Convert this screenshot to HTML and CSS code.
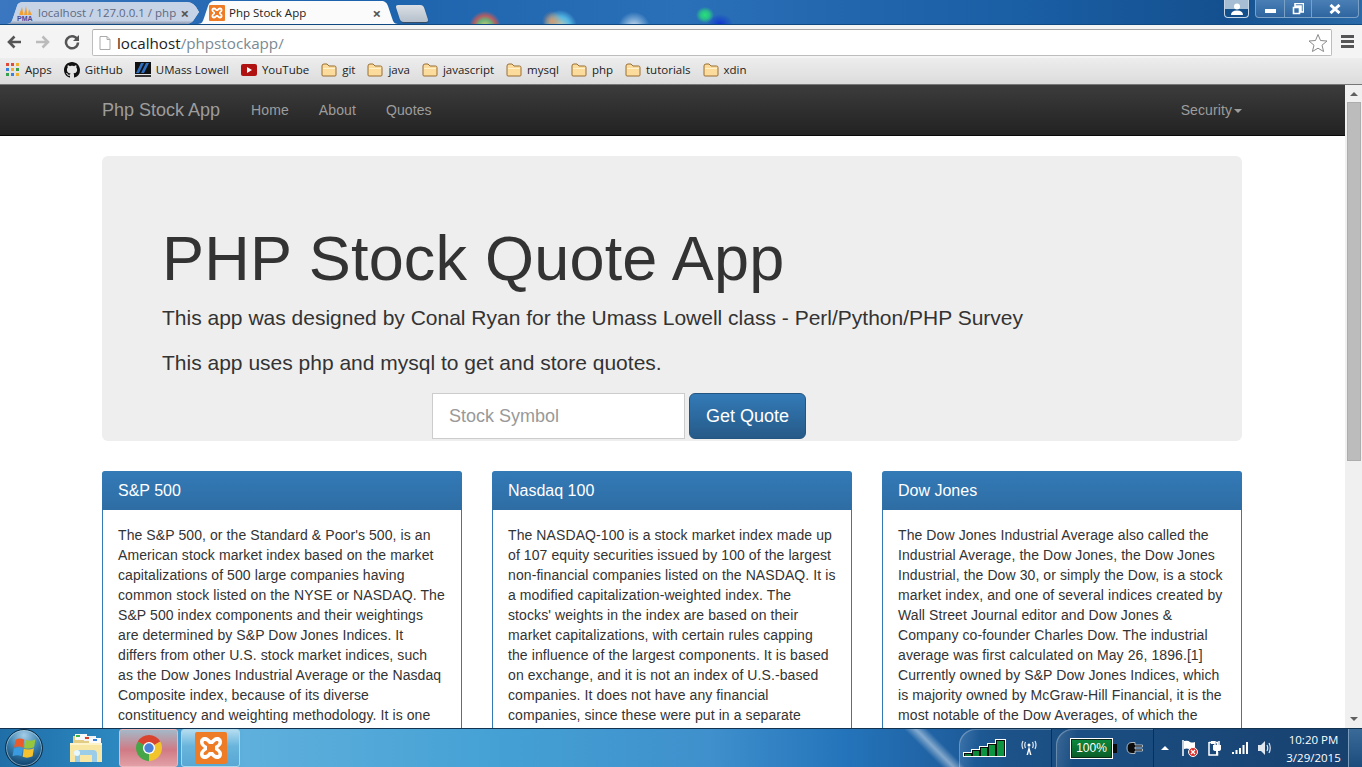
FILE: index.html
```html
<!DOCTYPE html>
<html lang="en">
<head>
    <meta charset="UTF-8">
    <meta name="viewport" content="width=device-width, initial-scale=1.0">
    <title>Php Stock App</title>
    <link rel="stylesheet" href="styles.css">
</head>
<body>

    <svg class="defs" width="0" height="0">
        <symbol id="folder" viewBox="0 0 16 14">
            <path d="M1 3 Q1 1 3 1 H6 L8 3 H13.5 Q15 3 15 4.500 V12 Q15 13 14 13 H2 Q1 13 1 12 Z" fill="#fbdc9c" stroke="#9a6f35"/>
            <path d="M2 5 H14 V6 H2 Z" fill="#fff1c9"/>
        </symbol>
        <symbol id="xampp" viewBox="0 0 32 32">
            <rect width="32" height="32" rx="2" fill="#ee7b25"/>
            <path d="M10 5 C7 5 5 7 5 10 C5 13 7 14 9 16 C7 18 5 19 5 22 C5 25 7 27 10 27 C13 27 14 25 16 23.500 C18 25 19 27 22 27 C25 27 27 25 27 22 C27 19 25 18 23 16 C25 14 27 13 27 10 C27 7 25 5 22 5 C19 5 18 7 16 8.500 C14 7 13 5 10 5 Z M10 9 C12 9 13 11 14 12 H18 C19 11 20 9 22 9 C23 9 23.500 9.500 23.500 10.500 C23.500 12 21 13.500 20 14 V18 C21 18.500 23.500 20 23.500 21.500 C23.500 22.500 23 23 22 23 C20 23 19 21 18 20 H14 C13 21 12 23 10 23 C9 23 8.500 22.500 8.500 21.500 C8.500 20 11 18.500 12 18 V14 C11 13.500 8.500 12 8.500 10.500 C8.500 9.500 9 9 10 9 Z" fill="#fff" fill-rule="evenodd"/>
        </symbol>
    </svg>

    <!-- Browser tabs -->
    <div class="tabstrip">
        <div class="tab tab-back">
            <svg class="tab-icon" viewBox="0 0 16 16" width="16" height="16">
                <path d="M2 10 L5 2 L6.500 10 Z M7 10 L9 1 L10.500 10 Z M11 10 L12 4 L15 10 Z" fill="#f0a030"/>
                <text x="0" y="15.500" class="pma">PMA</text>
            </svg>
            <span class="tab-title">localhost / 127.0.0.1 / php</span>
            <span class="tab-close">&#215;</span>
        </div>
        <div class="tab tab-active">
            <svg class="tab-icon" width="16" height="16"><use href="#xampp"/></svg>
            <span class="tab-title">Php Stock App</span>
            <span class="tab-close">&#215;</span>
        </div>
        <div class="tab-new"></div>
        <div class="window-controls">
            <div class="win-user">
                <svg viewBox="0 0 14 12" width="14" height="12">
                    <circle cx="7" cy="3.500" r="3" fill="#fff"/>
                    <path d="M1 12 Q1 7.500 7 7.500 Q13 7.500 13 12 Z" fill="#fff"/>
                </svg>
            </div>
            <div class="win-buttons">
                <div class="win-btn win-min"><span class="min-bar"></span></div>
                <div class="win-btn win-max">
                    <svg viewBox="0 0 12 12" width="12" height="12">
                        <path d="M3 0.500 H11.500 V9 H9 V3 H3 Z M1.500 4.500 H7.500 V10.500 H1.500 Z" fill="none" stroke="#fff" stroke-width="1.600"/>
                    </svg>
                </div>
                <div class="win-btn win-close">
                    <svg viewBox="0 0 12 10" width="12" height="10">
                        <path d="M1.500 1 L10.500 9 M10.500 1 L1.500 9" stroke="#fff" stroke-width="3"/>
                    </svg>
                </div>
            </div>
        </div>
    </div>

    <!-- Address bar -->
    <div class="toolbar">
        <svg class="tool-icon" viewBox="0 0 16 16" width="16" height="16">
            <path d="M15 8 H4 M8.500 2.500 L3 8 L8.500 13.500" fill="none" stroke="#555" stroke-width="2.600"/>
        </svg>
        <svg class="tool-icon" viewBox="0 0 16 16" width="16" height="16">
            <path d="M1 8 H12 M7.500 2.500 L13 8 L7.500 13.500" fill="none" stroke="#bbb" stroke-width="2.600"/>
        </svg>
        <svg class="tool-icon" viewBox="0 0 16 16" width="16" height="16">
            <path d="M13 5 A6 6 0 1 0 14 8.500" fill="none" stroke="#555" stroke-width="2.500"/>
            <path d="M15 1 V7 H9 Z" fill="#555"/>
        </svg>
        <div class="omnibox">
            <svg class="page-icon" viewBox="0 0 12 14" width="12" height="14">
                <path d="M1 0.500 H8 L11 3.500 V13.500 H1 Z M8 0.500 V3.500 H11" fill="#fff" stroke="#aaa"/>
            </svg>
            <span class="url"><span class="url-host">localhost</span>/phpstockapp/</span>
            <svg class="star" viewBox="0 0 20 20" width="20" height="20">
                <path d="M10 1.500 L12.500 7.500 L19 8 L14 12.200 L15.600 18.500 L10 15.200 L4.400 18.500 L6 12.200 L1 8 L7.500 7.500 Z" fill="#fff" stroke="#8a8a8a"/>
            </svg>
        </div>
        <div class="menu-icon"><span></span><span></span><span></span></div>
    </div>

    <!-- Bookmarks -->
    <div class="bookmarks">
        <span class="bookmark bookmark-apps">
            <svg viewBox="0 0 14 14" width="14" height="14">
                <rect x="0" y="0" width="3" height="3" fill="#e04a3a"/><rect x="5" y="0" width="3" height="3" fill="#e04a3a"/><rect x="10" y="0" width="3" height="3" fill="#f0b030"/>
                <rect x="0" y="5" width="3" height="3" fill="#3a80e0"/><rect x="5" y="5" width="3" height="3" fill="#f0b030"/><rect x="10" y="5" width="3" height="3" fill="#3aa050"/>
                <rect x="0" y="10" width="3" height="3" fill="#3aa050"/><rect x="5" y="10" width="3" height="3" fill="#3a80e0"/><rect x="10" y="10" width="3" height="3" fill="#f0b030"/>
            </svg>
            Apps
        </span>
        <span class="bookmark">
            <svg viewBox="0 0 16 16" width="16" height="16">
                <path fill="#111" d="M8 0C3.580 0 0 3.580 0 8c0 3.540 2.290 6.530 5.470 7.590.4.070.55-.170.55-.380 0-.190-.010-.820-.010-1.490-2.010.370-2.530-.490-2.690-.940-.090-.230-.480-.940-.820-1.130-.280-.150-.680-.520-.010-.530.630-.010 1.080.580 1.230.820.720 1.210 1.870.870 2.330.660.070-.520.280-.870.510-1.070-1.780-.200-3.640-.890-3.640-3.950 0-.870.310-1.590.820-2.150-.080-.200-.360-1.020.080-2.120 0 0 .670-.210 2.200.820.640-.180 1.320-.270 2-.270s1.360.090 2 .270c1.530-1.040 2.200-.820 2.200-.820.440 1.100.160 1.920.080 2.120.510.560.820 1.270.820 2.150 0 3.070-1.870 3.750-3.650 3.950.290.250.540.730.540 1.480 0 1.070-.010 1.930-.010 2.200 0 .210.150.460.550.380A8.010 8.010 0 0 0 16 8c0-4.420-3.580-8-8-8z"/>
            </svg>
            GitHub
        </span>
        <span class="bookmark">
            <svg viewBox="0 0 16 16" width="16" height="16">
                <rect width="16" height="12" fill="#111"/>
                <path d="M1 11 L6 1 H9 L4 11 Z M6 11 L11 1 H14 L9 11 Z" fill="#2f6fc0"/>
                <rect x="0" y="13" width="16" height="2" fill="#333"/>
            </svg>
            UMass Lowell
        </span>
        <span class="bookmark">
            <svg viewBox="0 0 16 12" width="16" height="12">
                <rect width="16" height="12" rx="2" fill="#b01212"/>
                <path d="M6 3 L11 6 L6 9 Z" fill="#fff"/>
            </svg>
            YouTube
        </span>
        <span class="bookmark"><svg width="16" height="14"><use href="#folder"/></svg>git</span>
        <span class="bookmark"><svg width="16" height="14"><use href="#folder"/></svg>java</span>
        <span class="bookmark"><svg width="16" height="14"><use href="#folder"/></svg>javascript</span>
        <span class="bookmark"><svg width="16" height="14"><use href="#folder"/></svg>mysql</span>
        <span class="bookmark"><svg width="16" height="14"><use href="#folder"/></svg>php</span>
        <span class="bookmark"><svg width="16" height="14"><use href="#folder"/></svg>tutorials</span>
        <span class="bookmark"><svg width="16" height="14"><use href="#folder"/></svg>xdin</span>
    </div>

    <!-- The page itself -->
    <div class="viewport">
        <div class="page">
            <nav class="navbar">
                <div class="container nav-row">
                    <a class="brand">Php Stock App</a>
                    <a class="nav-link">Home</a>
                    <a class="nav-link">About</a>
                    <a class="nav-link">Quotes</a>
                    <a class="nav-link nav-right">Security<span class="caret"></span></a>
                </div>
            </nav>

            <div class="container">
                <div class="jumbotron">
                    <h1>PHP Stock Quote App</h1>
                    <p>This app was designed by Conal Ryan for the Umass Lowell class - Perl/Python/PHP Survey</p>
                    <p>This app uses php and mysql to get and store quotes.</p>
                    <form class="quote-form">
                        <input class="symbol-input" type="text" placeholder="Stock Symbol">
                        <button class="quote-button" type="button">Get Quote</button>
                    </form>
                </div>

                <div class="panels">
                    <div class="panel">
                        <div class="panel-heading">S&amp;P 500</div>
                        <div class="panel-body">The S&amp;P 500, or the Standard &amp; Poor's 500, is an American stock market index based on the market capitalizations of 500 large companies having common stock listed on the NYSE or NASDAQ. The S&amp;P 500 index components and their weightings are determined by S&amp;P Dow Jones Indices. It<br>differs from other U.S. stock market indices, such as the Dow Jones Industrial Average or the Nasdaq Composite index, because of its diverse constituency and weighting methodology. It is one</div>
                    </div>
                    <div class="panel">
                        <div class="panel-heading">Nasdaq 100</div>
                        <div class="panel-body">The NASDAQ-100 is a stock market index made up of 107 equity securities issued by 100 of the largest non-financial companies listed on the NASDAQ. It is a modified capitalization-weighted index. The stocks' weights in the index are based on their market capitalizations, with certain rules capping the influence of the largest components. It is based on exchange, and it is not an index of U.S.-based companies. It does not have any financial companies, since these were put in a separate</div>
                    </div>
                    <div class="panel">
                        <div class="panel-heading">Dow Jones</div>
                        <div class="panel-body">The Dow Jones Industrial Average also called the Industrial Average, the Dow Jones, the Dow Jones Industrial, the Dow 30, or simply the Dow, is a stock market index, and one of several indices created by Wall Street Journal editor and Dow Jones &amp; Company co-founder Charles Dow. The industrial average was first calculated on May 26, 1896.[1] Currently owned by S&amp;P Dow Jones Indices, which is majority owned by McGraw-Hill Financial, it is the most notable of the Dow Averages, of which the</div>
                    </div>
                </div>
            </div>
        </div>

        <div class="scrollbar">
            <span class="arrow-up"></span>
            <div class="scroll-track"><div class="scroll-thumb"></div></div>
            <span class="arrow-down"></span>
        </div>
    </div>

    <!-- Windows taskbar -->
    <div class="taskbar">
        <div class="start-orb">
            <svg viewBox="0 0 24 24" width="25" height="25">
                <path d="M3.500 3.500 Q7.500 1.500 11.800 3.500 L10.600 11 Q6.500 9 2 11 Z" fill="#ea5a2a"/>
                <path d="M12.700 3.700 Q17 5.500 22.500 3 L21.200 10.800 Q16 13 11.600 11.200 Z" fill="#96c63c"/>
                <path d="M1.800 12 Q6 10 10.300 12 L9.200 19.500 Q5 17.500 0.500 19.500 Z" fill="#3a9be0"/>
                <path d="M11.300 12.300 Q16 14 21 11.800 L19.800 19.500 Q14.500 21.800 10.200 20 Z" fill="#f6c22e"/>
            </svg>
        </div>
        <div class="task-item">
            <svg viewBox="0 0 32 30" width="32" height="30">
                <path d="M3 3 H13 L15 6 H29 V12 H3 Z" fill="#e3cd85"/>
                <path d="M5 1 H17 V7 H5 Z" fill="#f8f8f8"/>
                <path d="M14 3 H26 V8 H14 Z" fill="#f2f2f2"/>
                <path d="M19 5 H31 V10 H19 Z" fill="#fafafa"/>
                <rect x="6" y="2" width="4" height="2" fill="#3bb54a"/>
                <rect x="15" y="4" width="4" height="2" fill="#d8402a"/>
                <rect x="23" y="6" width="4" height="2" fill="#3a80e0"/>
                <path d="M0 10 H32 V29 H0 Z" fill="#f8e6a4"/>
                <path d="M0 10 H32 V12 H0 Z" fill="#fdf3c8"/>
                <path d="M5 29 V21 Q5 17 9 17 H23 Q27 17 27 21 V29 H22 V22 H10 V29 Z" fill="#9ccde8"/>
                <circle cx="7" cy="20" r="3" fill="#e8f8ff"/>
            </svg>
        </div>
        <div class="task-btn task-chrome">
            <svg viewBox="0 0 32 32" width="30" height="30">
                <path d="M16 16 L4 9 A14 14 0 0 1 28 9 Z" fill="#d9442f"/>
                <path d="M16 16 L28 9 A14 14 0 0 1 16 30 Z" fill="#f2c42c"/>
                <path d="M16 16 L16 30 A14 14 0 0 1 4 9 Z" fill="#46a546"/>
                <circle cx="16" cy="16" r="6.500" fill="#fff"/>
                <circle cx="16" cy="16" r="5" fill="#4a82d8"/>
            </svg>
        </div>
        <div class="task-btn task-xampp">
            <svg width="32" height="32"><use href="#xampp"/></svg>
        </div>

        <div class="tray">
            <div class="tray-block tray-net">
                <svg viewBox="0 0 43 18" width="43" height="18">
                    <path d="M0 18 V13 H8 V10 H16 V7 H24 V4 H32 V0 H43 V18 Z" fill="#fff"/>
                    <path d="M1 17 V14 H9 V11 H17 V8 H25 V5 H33 V1 H42 V17 Z" fill="#0c0c0c"/>
                    <rect x="2" y="15" width="6" height="2" fill="#0a7a34"/>
                    <rect x="10" y="12" width="6" height="5" fill="#0b8a3a"/>
                    <rect x="18" y="9" width="6" height="8" fill="#0c9440"/>
                    <rect x="26" y="6" width="6" height="11" fill="#0c9440"/>
                    <rect x="34" y="2" width="7" height="15" fill="#0c9440"/>
                </svg>
                <svg viewBox="0 0 16 16" width="16" height="16">
                    <path d="M8 6 L5.500 15 H7 L8 11 L9 15 H10.500 Z" fill="#fff"/>
                    <circle cx="8" cy="5" r="1.500" fill="#fff"/>
                    <path d="M4.500 2 Q3 5 4.500 8 M11.500 2 Q13 5 11.500 8 M2 1 Q0 5 2 9 M14 1 Q16 5 14 9" fill="none" stroke="#dfe8f0" stroke-width="1.200"/>
                </svg>
            </div>
            <div class="tray-block tray-power">
                <div class="battery"><span class="battery-level">100%</span></div>
                <svg viewBox="0 0 18 14" width="18" height="14">
                    <path d="M9 1.500 H6 Q1 1.500 1 7 Q1 12.500 6 12.500 H9 V10 H16.500 V8 H9 V6 H16.500 V4 H9 Z" fill="#0c0c0c" stroke="#cfd8e0" stroke-width="0.800"/>
                </svg>
            </div>
            <div class="tray-icons">
                <span class="tray-arrow"></span>
                <svg viewBox="0 0 16 18" width="16" height="18">
                    <path d="M1 1 V17" stroke="#fff" stroke-width="1.500"/>
                    <path d="M2 2 Q6 1 8 3 Q10 4 13 3 V11 Q9 12 7 10 Q5 9 2 10 Z" fill="#fff"/>
                    <circle cx="11" cy="13" r="4.500" fill="#d9302a" stroke="#fff"/>
                    <path d="M9 11 L13 15 M13 11 L9 15" stroke="#fff" stroke-width="1.300"/>
                </svg>
                <svg viewBox="0 0 14 16" width="14" height="16">
                    <path d="M1 2.500 H3 M8 2.500 H9.500 V5 M1 2 V15 H9.500 V12" fill="none" stroke="#fff" stroke-width="1.500"/>
                    <path d="M3 1 H7 V4 H3 Z" fill="#fff"/>
                    <path d="M7 1 V5 M11 1 V5" stroke="#fff" stroke-width="1.500"/>
                    <path d="M5 5 H13 V9 Q13 11 10 11 V15 H8 V11 Q5 11 5 9 Z" fill="#fff"/>
                </svg>
                <svg viewBox="0 0 16 12" width="16" height="12">
                    <path d="M0 10 H2 V12 H0 Z M3.500 8 H5.500 V12 H3.500 Z M7 6 H9 V12 H7 Z M10.500 3 H12.500 V12 H10.500 Z M14 0 H16 V12 H14 Z" fill="#fff"/>
                </svg>
                <svg viewBox="0 0 14 16" width="14" height="16">
                    <path d="M0 5 H3 L7 1 V15 L3 11 H0 Z" fill="#dfe6ee"/>
                    <path d="M9 5 Q10.500 8 9 11 M11 3 Q13.500 8 11 13" fill="none" stroke="#dfe6ee" stroke-width="1.200"/>
                </svg>
            </div>
            <div class="clock"><div>10:20 PM</div><div>3/29/2015</div></div>
            <div class="show-desktop"></div>
        </div>
    </div>

</body>
</html>
```

FILE: styles.css
```css
/* General Styles */
* {
    margin: 0;
    padding: 0;
    box-sizing: border-box;
}

body {
    width: 1362px;
    height: 767px;
    overflow: hidden;
    display: flex;
    flex-direction: column;
    font-family: 'Liberation Sans', Arial, sans-serif;
    font-size: 14px;
    line-height: 20px;
    color: #333;
    background: #fff;
}

.defs {
    position: absolute;
}

/* Browser tabs, the blobs are desktop icons showing through the glass */
.tabstrip {
    height: 25px;
    flex: none;
    display: flex;
    padding-left: 7px;
    border-bottom: 1px solid #0f4a80;
    background:
        radial-gradient(circle 16px at 485px 27px, rgba(240, 220, 110, 0.9) 0, rgba(120, 190, 110, 0.85) 45%, rgba(215, 90, 80, 0.8) 70%, transparent 100%),
        radial-gradient(circle 10px at 552px 21px, rgba(235, 150, 90, 0.85) 0, transparent 100%),
        radial-gradient(circle 17px at 560px 27px, rgba(240, 220, 170, 0.85) 0, rgba(90, 195, 235, 0.85) 60%, transparent 100%),
        radial-gradient(circle 16px at 634px 28px, rgba(240, 245, 250, 0.9) 0, rgba(150, 190, 225, 0.6) 60%, transparent 100%),
        radial-gradient(ellipse 9px 8px at 705px 15px, rgba(40, 225, 120, 1) 0, rgba(40, 225, 120, 0.7) 50%, transparent 100%),
        radial-gradient(ellipse 13px 10px at 720px 24px, rgba(15, 50, 210, 0.95) 0, transparent 100%),
        linear-gradient(90deg, #3a77c0 0%, #1c62ac 25%, #2a70b8 50%, #1a5ea4 75%, #14508f 90%, #2a6aa8 100%);
}

.tab {
    height: 24px;
    display: flex;
    align-items: center;
    font-family: 'Open Sans', sans-serif;
    font-size: 11.5px;
    flex: none;
}

.tab-back {
    width: 192px;
    padding: 2px 10px 0 10px;
    color: #5d6a82;
    margin-right: -1px;
    background: linear-gradient(#c6d2e6 85%, #8a97ad), linear-gradient(90deg, #c4d1e6, #d8dde8 60%, #c3cfe2);
    clip-path: path('M0 24 C4 24 5 21 6 18 L10 6 C11 3 13 2 17 2 L178 2 C183 2 186 3 189 7 L192 12 L186 21 C184 23 182 24 178 24 Z');
}

.tab-back .tab-icon {
    margin-right: 5px;
}

.tab-active {
    width: 200px;
    padding: 2px 17px 0 11px;
    color: #222;
    background: #fbfbfb;
    clip-path: path('M0 24 C4 24 5 21 6 18 L10 6 C11 3 13 1 17 1 L183 1 C187 1 189 3 190 6 L194 18 C195 21 196 24 200 24 Z');
}

.tab-icon {
    flex: none;
    margin-right: 4px;
}

.pma {
    font-family: 'Liberation Sans', sans-serif;
    font-size: 7px;
    font-weight: bold;
    fill: #4a4a9a;
}

.tab-title {
    flex: 1;
    white-space: nowrap;
    overflow: hidden;
}

.tab-close {
    flex: none;
    font-size: 15px;
    font-weight: bold;
    color: #555;
    margin-left: 3px;
}

.tab-new {
    width: 28px;
    height: 17px;
    margin: 5px 0 0 0;
    background: linear-gradient(#dcdfe4, #b4c0cc);
    box-shadow: 0 1px 1px #3a4a5a;
    transform: skewX(18deg);
    border-radius: 3px;
}

.window-controls {
    margin-left: auto;
    display: flex;
    align-items: flex-start;
    gap: 6px;
    margin-right: 3px;
}

.win-user {
    width: 25px;
    height: 18px;
    display: flex;
    justify-content: center;
    align-items: center;
    border: 1px solid #c5d5e5;
    border-top: none;
    border-radius: 0 0 4px 4px;
    background: linear-gradient(#a6bdd4 55%, #134f8a 55%);
}

.win-buttons {
    display: flex;
    height: 18px;
    border: 1px solid #7ba0c6;
    border-top: none;
    border-radius: 0 0 4px 4px;
    background: linear-gradient(#4a7fb5, #2e66a0);
}

.win-btn {
    display: flex;
    justify-content: center;
    align-items: center;
    border-right: 1px solid #7ba0c6;
}

.win-min {
    width: 29px;
}

.min-bar {
    width: 11px;
    height: 4px;
    margin-top: 5px;
    background: #fff;
}

.win-max {
    width: 27px;
}

.win-close {
    width: 46px;
    border-right: none;
}

/* Address bar */
.toolbar {
    height: 33px;
    flex: none;
    display: flex;
    align-items: center;
    padding: 0 8px 0 6px;
    background: #f4f4f4;
}

.tool-icon {
    flex: none;
    margin-right: 13px;
}

.omnibox {
    flex: 1;
    height: 27px;
    margin: 2px 9px 0 -1px;
    display: flex;
    align-items: center;
    padding: 0 3px 0 6px;
    background: #fff;
    border: 1px solid #bdbdbd;
    border-top-color: #a5a5a5;
    border-radius: 2px;
}

.page-icon {
    flex: none;
    margin-right: 6px;
}

.url {
    flex: 1;
    font-family: 'Open Sans', sans-serif;
    font-size: 15.200px;
    color: #7a8a94;
}

.url-host {
    color: #222;
}

.menu-icon {
    width: 13px;
    display: flex;
    flex-direction: column;
    gap: 2px;
}

.menu-icon span {
    height: 3px;
    background: #555;
}

/* Bookmarks */
.bookmarks {
    height: 27px;
    flex: none;
    display: flex;
    align-items: center;
    padding: 0 6px 2px;
    gap: 12px;
    font-family: 'Open Sans', sans-serif;
    font-size: 11.500px;
    color: #222;
    background: linear-gradient(#ededed, #dcdcdc);
    border-bottom: 1px solid #777;
}

.bookmark {
    display: flex;
    align-items: center;
    gap: 5px;
    white-space: nowrap;
}

/* The page itself */
.viewport {
    flex: 1;
    display: flex;
    min-height: 0;
}

.page {
    flex: 1;
    overflow: hidden;
}

.container {
    width: 1140px;
    margin-left: 102px;
}

.navbar {
    height: 51px;
    background: linear-gradient(#3c3c3c, #222);
    border-bottom: 1px solid #080808;
    margin-bottom: 20px;
}

.nav-row {
    display: flex;
    height: 50px;
    align-items: center;
}

.brand {
    font-size: 18px;
    color: #9d9d9d;
    margin-right: 31px;
}

.nav-link {
    color: #9d9d9d;
    letter-spacing: 0.1px;
    margin-right: 30px;
}

.nav-right {
    margin-left: auto;
    margin-right: 0;
}

.caret {
    display: inline-block;
    margin-left: 2px;
    vertical-align: middle;
    border-top: 4px solid #9d9d9d;
    border-left: 4px solid transparent;
    border-right: 4px solid transparent;
}

.jumbotron {
    height: 285px;
    padding: 68px 60px 0;
    margin-bottom: 30px;
    background: #eee;
    border-radius: 6px;
}

h1 {
    font-size: 63px;
    font-weight: 500;
    line-height: 69px;
    letter-spacing: 0.2px;
    margin-bottom: 10px;
}

.jumbotron p {
    font-size: 21px;
    line-height: 30px;
    margin-bottom: 15px;
}

.quote-form {
    display: flex;
    gap: 4px;
    margin-left: 270px;
}

.symbol-input {
    width: 253px;
    height: 46px;
    padding: 0 16px;
    font-family: inherit;
    font-size: 18px;
    color: #555;
    background: #fff;
    border: 1px solid #ccc;
}

.symbol-input::placeholder {
    color: #999;
}

.quote-button {
    width: 117px;
    height: 46px;
    font-family: inherit;
    font-size: 18px;
    color: #fff;
    background: linear-gradient(#337ab7, #265a88);
    border: 1px solid #245580;
    border-radius: 6px;
}

.panels {
    display: grid;
    grid-template-columns: repeat(3, 360px);
    gap: 30px;
}

.panel {
    height: 300px;
    border: 1px solid #337ab7;
    border-radius: 4px;
}

.panel-heading {
    height: 39px;
    margin: -1px -1px 0;
    padding: 10px 16px;
    font-size: 16px;
    color: #fff;
    background: linear-gradient(#337ab7, #2e6da4);
    border-radius: 3px 3px 0 0;
}

.panel-body {
    padding: 15px;
    letter-spacing: 0.09px;
}

/* Scrollbar */
.scrollbar {
    width: 17px;
    flex: none;
    display: flex;
    flex-direction: column;
    align-items: center;
    background: #f0f0f0;
}

.arrow-up,
.arrow-down {
    flex: none;
    width: 0;
    height: 0;
    border-left: 4px solid transparent;
    border-right: 4px solid transparent;
}

.arrow-up {
    margin: 7px 0 6px;
    border-bottom: 4px solid #606060;
}

.arrow-down {
    margin: 6px 0 7px;
    border-top: 4px solid #606060;
}

.scroll-track {
    flex: 1;
    width: 100%;
    padding: 0 1px 0 2px;
}

.scroll-thumb {
    height: 359px;
    background: #bcbcbc;
    border: 1px solid #adadad;
}

/* Windows taskbar */
.taskbar {
    height: 39px;
    flex: none;
    display: flex;
    align-items: center;
    color: #fff;
    border-top: 1px solid #12324f;
    background:
        linear-gradient(45deg, transparent 38%, rgba(255, 255, 255, 0.45) 50%, transparent 62%) 905px 0 / 60px 39px no-repeat,
        linear-gradient(90deg, #1f6ea8 0%, #2f8cc4 10%, #5fb0dc 18%, #44a0d4 37%, #3f90cc 52%, #2474bb 62%, #1f5f9f 70%, #1c5288 74%, #17406e 100%);
}

.start-orb {
    width: 38px;
    height: 38px;
    margin-left: 5px;
    flex: none;
    display: flex;
    justify-content: center;
    align-items: center;
    border-radius: 50%;
    border: 1px solid #0c2c44;
    box-shadow: inset 0 0 0 1px rgba(190, 220, 240, 0.55);
    background: radial-gradient(circle at 50% 15%, #a4cde6, #3b82b0 45%, #164a74 80%);
}

.task-item {
    width: 32px;
    margin: 0 17px 0 27px;
    flex: none;
    display: flex;
}

.task-btn {
    height: 38px;
    flex: none;
    display: flex;
    justify-content: center;
    align-items: center;
    border-radius: 3px;
}

.task-chrome {
    width: 59px;
    background: linear-gradient(#a4b8c8, #d07a84 55%, #e2a0a6);
    border: 1px solid #eab8bc;
}

.task-xampp {
    width: 59px;
    margin-left: 3px;
    background: linear-gradient(#b4dcf0, #68b4dc 45%, #58a8d4);
    border: 1px solid #a8d8ee;
}

.tray {
    margin-left: auto;
    height: 100%;
    display: flex;
    align-items: center;
}

.tray-block {
    height: 100%;
    display: flex;
    align-items: center;
    border-right: 1px solid #0e2f50;
    border-radius: 16px 0 0 0;
    box-shadow: inset 1px 1px 0 rgba(255, 255, 255, 0.25);
    background: linear-gradient(100deg, rgba(255, 255, 255, 0.14), transparent 22%);
}

.tray-net {
    width: 93px;
    padding-left: 4px;
    gap: 15px;
}

.tray-power {
    width: 98px;
    margin-left: 4px;
    padding-left: 14px;
    gap: 13px;
}

.battery {
    position: relative;
    width: 43px;
    height: 21px;
    display: flex;
    justify-content: center;
    align-items: center;
    border: 1px solid #fff;
    background: linear-gradient(#0c8a3c, #0a5c28);
    font-size: 12px;
    box-shadow: inset 0 0 0 1px #0b2a1a;
}

/* battery tip */
.battery::after {
    content: "";
    position: absolute;
    left: 42px;
    top: 5px;
    width: 4px;
    height: 9px;
    background: #0c0c0c;
}

.tray-icons {
    width: 125px;
    padding-left: 7px;
    display: flex;
    align-items: center;
    gap: 10px;
}

.tray-arrow {
    width: 0;
    height: 0;
    margin-right: 3px;
    border-left: 4px solid transparent;
    border-right: 4px solid transparent;
    border-bottom: 4px solid #fff;
}

.clock {
    width: 69px;
    padding-top: 2px;
    text-align: center;
    font-family: 'Open Sans', sans-serif;
    font-size: 11.500px;
    line-height: 18px;
}

.show-desktop {
    width: 14px;
    height: 100%;
    background: linear-gradient(#3a6a98, #1c4c7c);
    border-left: 1px solid #7a9cbc;
}
```
